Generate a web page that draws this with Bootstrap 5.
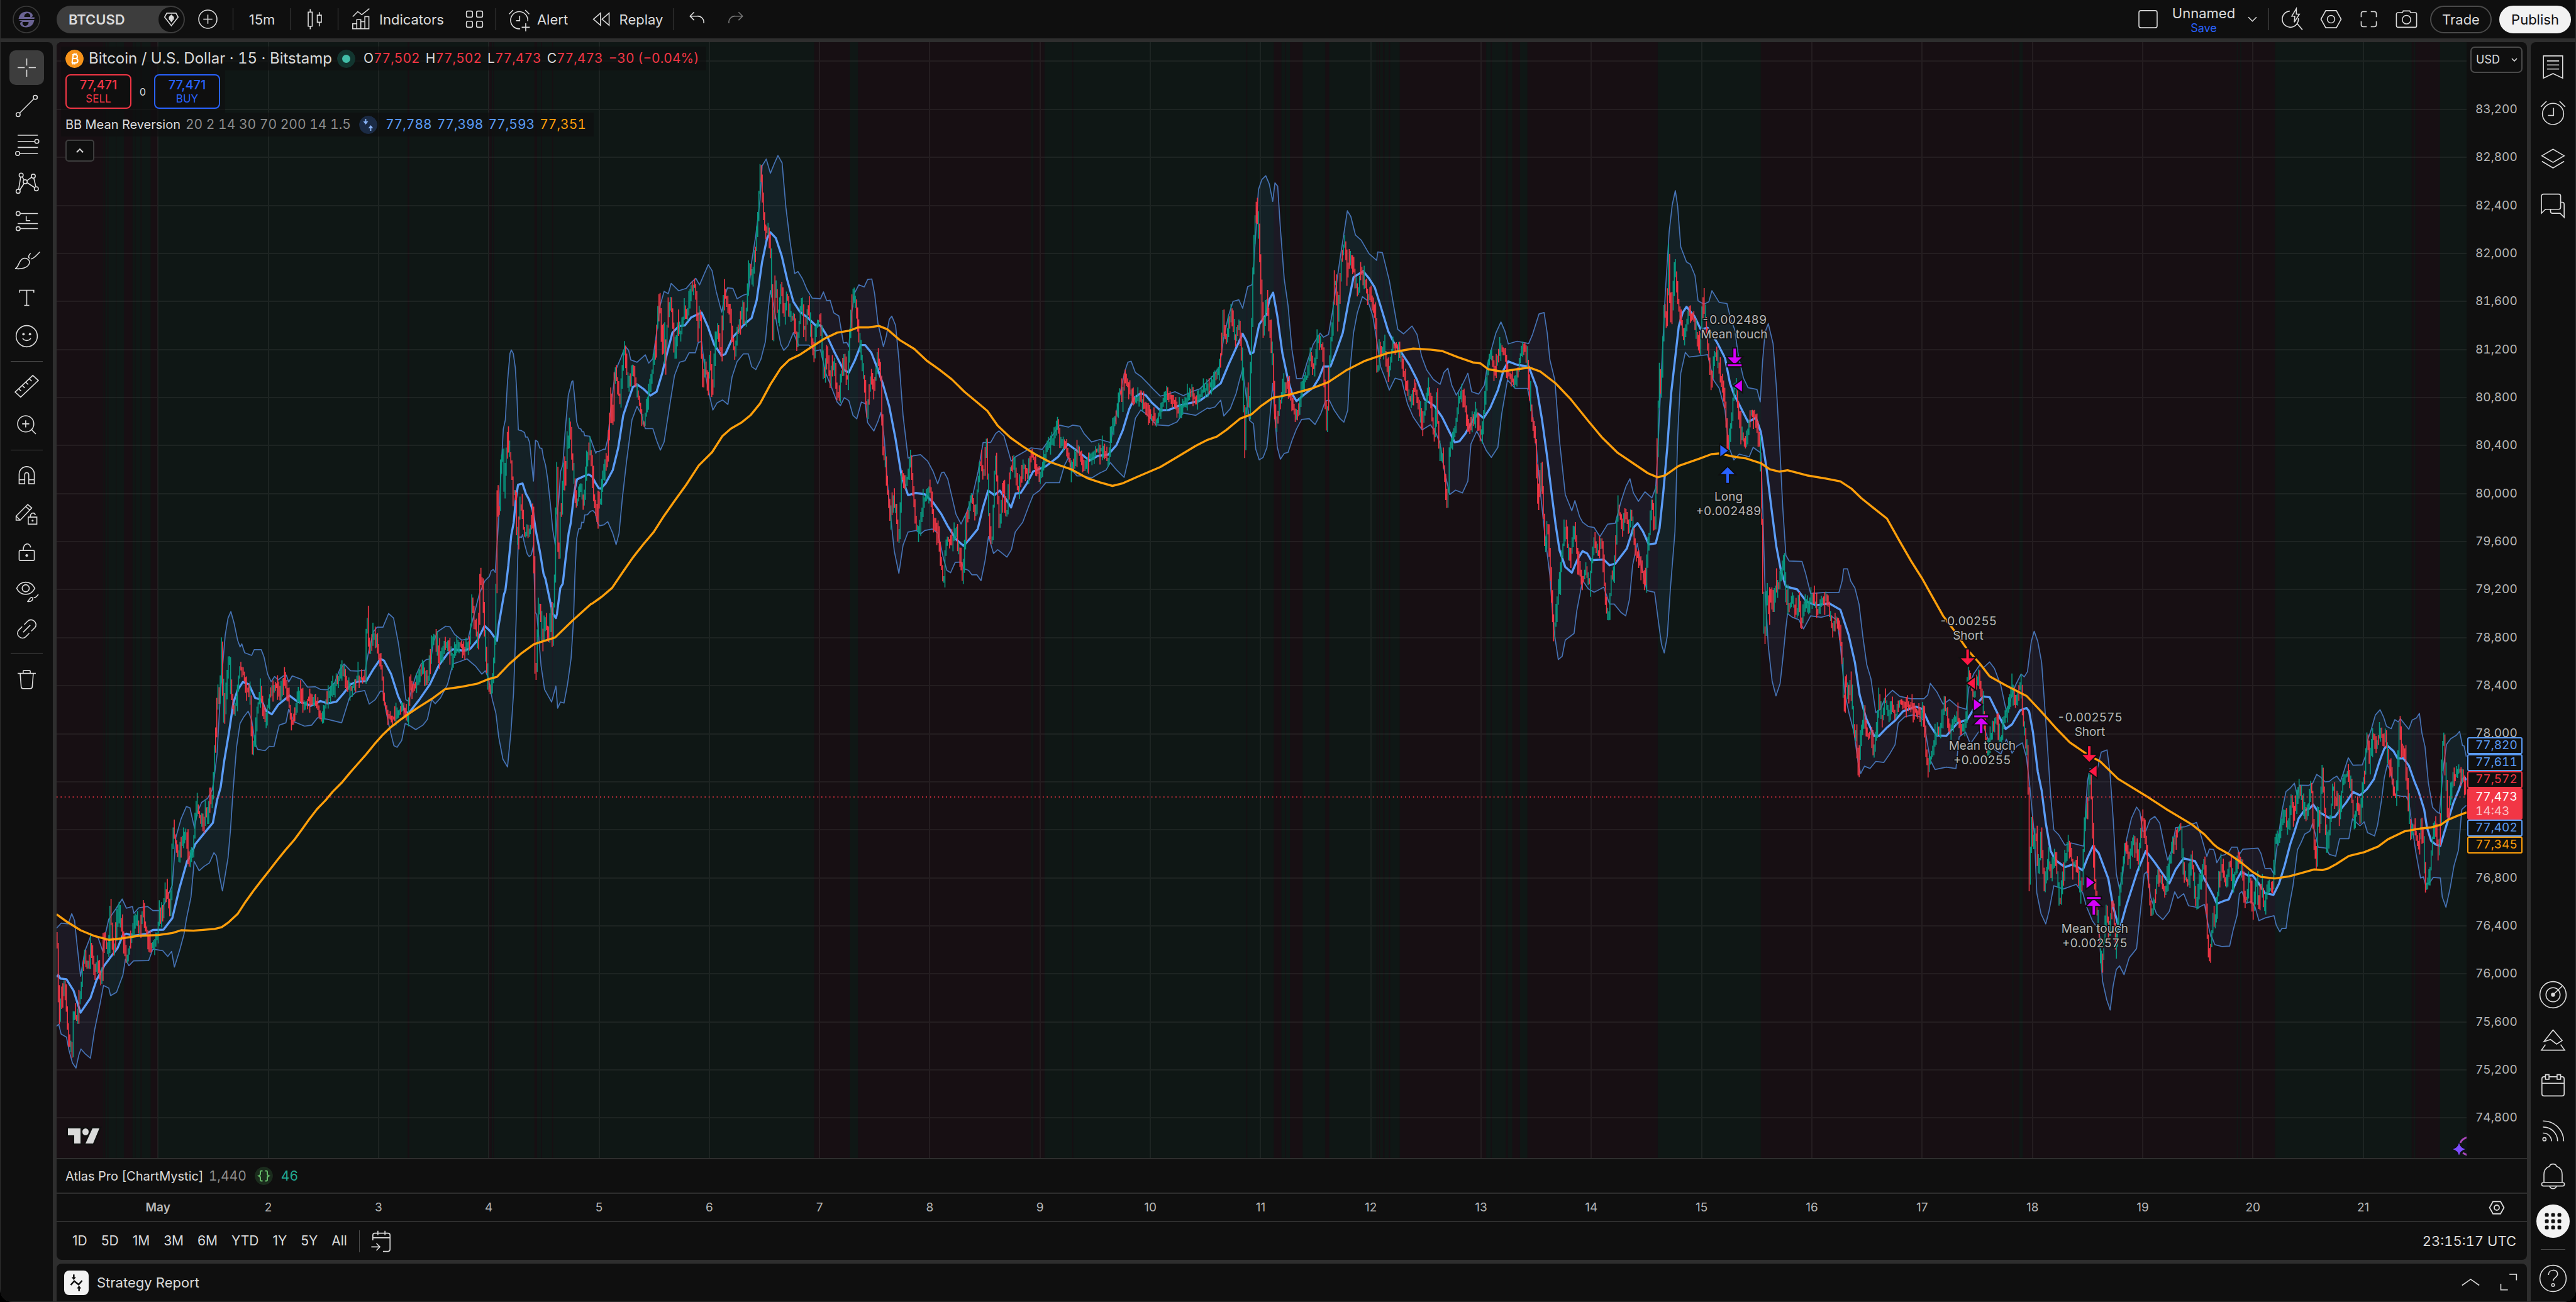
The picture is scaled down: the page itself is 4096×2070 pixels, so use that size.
<!DOCTYPE html>
<html lang="en" data-bs-theme="dark">
<head>
<meta charset="utf-8">
<meta name="viewport" content="width=device-width, initial-scale=1">
<title>BTCUSD 77,473</title>
<link rel="stylesheet" href="https://cdn.jsdelivr.net/npm/bootstrap@5.3.0/dist/css/bootstrap.min.css">
<style>
:root{--panel:#0f0f0f;--gutter:#2e2e2e;--ink:#dbdbdb;--dim:#b8b8b8;--faint:#8c8c8c;--bear:#f23645;--link:#2962ff;--band:#5b9cf6;--ema:#ff9f0a}
html{background:#000}
body{background:#000;color:var(--ink);font-family:Inter,"Liberation Sans",sans-serif;font-size:22px;line-height:28px;overflow:hidden}
button,select{font-family:inherit}
.shell{background:var(--gutter);border-radius:0 0 20px 20px;padding:0 1px 1px;overflow:hidden}
.pane{background:var(--panel)}
.topbar{height:61px;background:var(--panel)}
.work{gap:6px;padding-top:6px;min-height:0}
.rail-l{width:83px;padding-top:10px;border-radius:0 8px 0 0}
.rail-r{width:71px;padding-top:3px;border-radius:8px 0 0 0}
.tool{background:none;border:0;padding:0;color:var(--ink);display:flex;align-items:center;justify-content:center;flex:none}
.ico{width:45px;height:45px;fill:none;stroke:currentColor;stroke-width:1;flex:none}
.ico .solid{fill:currentColor;stroke:none}
.ico.lg{width:39px;height:39px}
.ico.sm{width:32px;height:32px}
.rail-l .tool{width:55px;height:55px;margin:3px 14px;border-radius:10px}
.rail-l .tool.on{background:#3d3d3d}
.rule-h{height:1px;margin:9px 16px;background:#4a4a4a;flex:none}
.rail-r .tool{width:71px;height:73px}
.rail-r .low .tool{height:72px}
.rail-r .low svg{overflow:visible}
.rule-v{width:1px;height:35px;background:#4a4a4a;flex:none}
.avatar{width:44px;height:44px;margin:0 26px 0 19px;flex:none}
.sym{width:204px;height:44px;border-radius:22px;background:#3d3d3d;font-weight:600;padding:0 2px 0 19px;justify-content:space-between}
.sym .gem{width:40px;height:40px;border-radius:50%;background:var(--panel)}
.w50{width:50px}.w60{width:60px}.w68{width:68px}.w72{width:72px}.w74{width:74px}.w91{width:91px}.w118{width:118px}.w128{width:128px}.w154{width:154px}.w182{width:182px}.w36{width:36px}
.gap6{gap:6px}
.sub{font-size:18px;line-height:20px;color:var(--link)}
.pill{height:44px;border-radius:22px;border:2px solid #4a4a4a}
.pill.trade{width:98px;margin-left:8px}
.pill.publish{width:114px;margin:0 7px 0 12px;background:#f2f2f2;border-color:#f2f2f2;color:#0f0f0f}
.chartbox{border-radius:8px;overflow:hidden;min-height:0}
.plot{min-width:0}
#chart{display:block;width:100%;height:100%;position:absolute;inset:0}
#chart text,.tnum,.prices{font-variant-numeric:tabular-nums}
.prices{width:96px;flex:none}
.prices .tick,.times .tick{position:absolute;font-size:19px;line-height:24px;color:var(--dim)}
.prices .tick{left:14px;transform:translateY(-50%)}
.times .tick{top:10px;transform:translateX(-50%)}
.tags{position:absolute;left:1px;width:88px}
.tag{height:27px;border:2px solid;border-radius:3px;padding-left:11px;font-size:19px;line-height:22px;background:var(--panel)}
.tag.last{height:50px;background:var(--bear);border-color:var(--bear);color:#fff;line-height:23px}
.tag.last span{color:#fbc3c7}
.usd{position:absolute;left:6px;top:7px;width:83px;height:42px;appearance:none;font-size:18px;line-height:24px;padding:0 0 0 7px;color:var(--ink);border:2px solid #4a4a4a;border-radius:7px;background:var(--panel) url("data:image/svg+xml,%3Csvg xmlns='http://www.w3.org/2000/svg' viewBox='0 0 10 6'%3E%3Cpath d='M1 1l4 4 4-4' fill='none' stroke='%23dbdbdb' stroke-width='1.6'/%3E%3C/svg%3E") no-repeat right 6px center/10px 6px}
.legend{position:absolute;left:7px;top:7px;z-index:2}
.lrow{background:rgba(15,15,15,.62);padding-left:7px;width:max-content}
.l1{height:38px;font-size:24px;padding-right:12px}
.l2{height:67px;padding-right:8px}
.l3{height:38px;font-size:20px;padding-right:12px}
.nums{font-size:21px}
.dot{width:29px;height:29px;border-radius:50%;flex:none}
.dot.mid{margin:0 13px}
.ohlc{font-size:21px;gap:9px;margin-left:13px}
.ohlc b{font-weight:400;color:var(--bear)}
.quote{width:105px;height:55px;border-radius:8px;border:2px solid;background:var(--panel);font-size:20px;line-height:23px;flex-direction:column;font-weight:500}
.quote small{font-size:17px;line-height:21px;font-weight:400}
.spread{width:36px;font-size:16px}
.fold{width:46px;height:35px;margin:5px 0 0 7px;border:2px solid #3d3d3d;border-radius:5px;background:var(--panel)}
.study{height:55px;border-top:2px solid var(--gutter);font-size:20px;padding-left:14px}
.timebar{height:45px;border-top:2px solid var(--gutter)}
.rangebar{height:62px;border-top:2px solid var(--gutter);padding:0 17px 0 14px;font-size:21px}
.rangebar .rng{padding:0 11px}
.clock{font-size:22px}
.report{height:60px;border-radius:8px 8px 0 0;padding-left:12px;font-size:22px}
.report .badge-ic{width:39px;height:39px;border-radius:8px;background:#f2f2f2;color:#0f0f0f;margin-right:13px}
.col-main{gap:6px;min-width:0}
.muted{color:var(--faint)}.blue{color:var(--band)}.orange{color:var(--ema)}.red{color:var(--bear)}.azure{color:var(--link)}.teal{color:#22ab94}
</style>
</head>
<body>
<div class="shell vh-100 d-flex flex-column">
  <header class="topbar d-flex align-items-center flex-shrink-0">
    <svg class="avatar" viewBox="0 0 44 44" aria-hidden="true"><circle cx="22" cy="22" r="21" fill="#0f0f0f" stroke="#3a3a3a" stroke-width="1.5"/><path d="M34.500 21H9.500C11 13 16 9.500 22.500 9.500c6 0 9.500 3.500 9.500 6 0 2-1.500 3-3.500 3H35zM28 18c1-4-2-6.500-5-6-3 .500-4.500 3-4.500 6z" fill="#6a6393" fill-rule="evenodd"/><path d="M9.500 23h25C33 31 28 34.500 21.500 34.500c-6 0-9.500-3.500-9.500-6 0-2 1.500-3 3.500-3zM16 26c-1 4 2 6.500 5 6 3-.500 4.500-3 4.500-6z" fill="#6a6393" fill-rule="evenodd"/></svg>
    <button class="tool sym">BTCUSD <span class="gem d-flex align-items-center justify-content-center"><svg class="ico" viewBox="0 0 28 28"><path d="M9.500 8h9l2.200 4-6.700 8.500L7.300 12zM14 10v7M12 12l2-2 2 2v2l-2 2-2-2z"/><path class="solid" d="M14 9.500l2 3-2 4-2-4z"/></svg></span></button>
    <button class="tool w72" aria-label="Compare"><svg class="ico" viewBox="0 0 28 28"><circle cx="14" cy="14" r="9"/><path d="M14 9.500v9M9.500 14h9"/></svg></button>
    <i class="rule-v ms-1"></i>
    <button class="tool w91">15m</button>
    <i class="rule-v"></i>
    <button class="tool w74" aria-label="Candles"><svg class="ico" viewBox="0 0 28 28"><path d="M7.500 7h4v14h-4zM9.500 7V4M9.500 21v3M16.500 10h4v7h-4zM18.500 10V7M18.500 17v4"/></svg></button>
    <i class="rule-v"></i>
    <button class="tool w182 gap6"><svg class="ico" viewBox="0 0 28 28"><path d="M5.500 11.500L10.500 6.500 14.500 9.500 22 3.500M5.500 18.500h4v5h-4zM9.500 14.500h4v9h-4zM13.500 16.500h4v7h-4zM17.500 11.500h4v12h-4z"/></svg>Indicators</button>
    <button class="tool w68" aria-label="Templates"><svg class="ico" viewBox="0 0 28 28"><rect x="6" y="6" width="6" height="6" rx="1.500"/><rect x="16" y="6" width="6" height="6" rx="1.500"/><rect x="6" y="16" width="6" height="6" rx="1.500"/><rect x="16" y="16" width="6" height="6" rx="1.500"/></svg></button>
    <i class="rule-v"></i>
    <button class="tool w128 gap6"><svg class="ico" viewBox="0 0 28 28"><path d="M15 23.500a8.500 8.500 0 1 1 7.500-7.500M4 9l4-4M20 5l4 4M14.500 10.500v5h-3.500M20.500 18v8M16.500 22h8"/></svg>Alert</button>
    <button class="tool w154 gap6"><svg class="ico" viewBox="0 0 28 28"><path d="M13 8v12l-7-6zM21.500 8v12l-7-6z"/></svg>Replay</button>
    <i class="rule-v"></i>
    <button class="tool w72" aria-label="Undo"><svg class="ico" viewBox="0 0 28 28"><path d="M11 7l-4 4 4 4M7 11h7a6 6 0 0 1 6.500 7"/></svg></button>
    <button class="tool w50" aria-label="Redo"><svg class="ico opacity-50" viewBox="0 0 28 28"><path d="M17 7l4 4-4 4M21 11h-7a6 6 0 0 0-6.500 7"/></svg></button>
    <div class="ms-auto d-flex align-items-center">
      <button class="tool w60" aria-label="Layout"><svg class="ico" viewBox="0 0 28 28"><rect x="5" y="5.500" width="18" height="17" rx="2"/></svg></button>
      <button class="tool w118 flex-column"><span>Unnamed</span><span class="sub">Save</span></button>
      <button class="tool w36" aria-label="Layouts"><svg class="ico" viewBox="0 0 28 28"><path d="M10 12l4 4 4-4"/></svg></button>
      <i class="rule-v mx-2"></i>
      <button class="tool w60" aria-label="Quick search"><svg class="ico" viewBox="0 0 28 28"><path d="M10.500 6a8 8 0 1 0 8.500 7M18 18.500l5 6M17 3.500l-4.500 7.500h3l-.500 6 5-8h-3z"/></svg></button>
      <button class="tool w60" aria-label="Settings"><svg class="ico" viewBox="0 0 28 28"><path d="M4 14l4.800-8.500h10.400L24 14l-4.800 8.500H8.800z"/><circle cx="14" cy="14" r="3.700"/></svg></button>
      <button class="tool w60" aria-label="Fullscreen"><svg class="ico" viewBox="0 0 28 28"><path d="M12 6.500H8.500a2 2 0 0 0-2 2V12M16 6.500h3.500a2 2 0 0 1 2 2V12M12 21.500H8.500a2 2 0 0 1-2-2V16M16 21.500h3.500a2 2 0 0 0 2-2V16"/></svg></button>
      <button class="tool w60" aria-label="Snapshot"><svg class="ico" viewBox="0 0 28 28"><path d="M5.500 7.500H10l.800-1.700h6.400l.800 1.700h4.500a1.500 1.500 0 0 1 1.500 1.500v11.500a1.500 1.500 0 0 1-1.500 1.500h-17A1.500 1.500 0 0 1 4 20.500V9a1.500 1.500 0 0 1 1.500-1.500z"/><circle cx="14" cy="14.500" r="4.200"/></svg></button>
      <button class="tool pill trade">Trade</button>
      <button class="tool pill publish">Publish</button>
    </div>
  </header>

  <div class="work d-flex flex-grow-1">
    <nav class="rail-l pane d-flex flex-column flex-shrink-0" id="draw"></nav>

    <main class="col-main d-flex flex-column flex-grow-1">
      <section class="chartbox pane d-flex flex-column flex-grow-1">
        <div class="d-flex flex-grow-1">
          <div class="plot position-relative flex-grow-1" id="plot">
            <svg id="chart" role="img" aria-label="BTCUSD chart"></svg>
            <div class="legend tnum">
              <div class="lrow l1 d-flex align-items-center">
                <svg class="dot" viewBox="0 0 29 29"><circle cx="14.500" cy="14.500" r="14.500" fill="#f7931a"/><path d="M11 8h5c4 0 4 6 0 6h-4 4c5 0 5 7 0 7h-6M12.500 8l-2 13M14 5.500l-.500 3M17 5.500l-.500 3M12 20.500l-.500 3M15 20.500l-.500 3" fill="none" stroke="#fff" stroke-width="2"/></svg>
                <span class="ms-2">Bitcoin / U.S. Dollar · 15 · Bitstamp</span>
                <svg class="dot ms-2" viewBox="0 0 29 29"><circle cx="14.500" cy="14.500" r="14.500" fill="#12352f"/><circle cx="14.500" cy="14.500" r="6.500" fill="#42bda8"/></svg>
                <span class="ohlc d-flex"><span>O<b>77,502</b></span><span>H<b>77,502</b></span><span>L<b>77,473</b></span><span>C<b>77,473</b></span><b>−30 (−0.04%)</b></span>
              </div>
              <div class="lrow l2 d-flex align-items-center">
                <button class="tool quote red">77,471<small>SELL</small></button>
                <span class="spread text-center">0</span>
                <button class="tool quote azure">77,471<small>BUY</small></button>
              </div>
              <div class="lrow l3 d-flex align-items-center">
                <span>BB Mean Reversion</span><span class="muted nums ms-2">20 2 14 30 70 200 14 1.5</span>
                <svg class="dot mid" viewBox="0 0 29 29"><circle cx="14.500" cy="14.500" r="14.500" fill="#1b2b45"/><path d="M10.500 5v5M18.500 24v-5" stroke="#8ab4f8" stroke-width="1.800"/><path d="M6.500 9h8l-4 5zM14.500 20h8l-4-5z" fill="#8ab4f8"/></svg>
                <span class="d-flex blue nums gap-2"><span>77,788</span><span>77,398</span><span>77,593</span><span class="orange">77,351</span></span>
              </div>
              <button class="tool fold" aria-label="Collapse"><svg class="ico sm" viewBox="0 0 28 28"><path d="M9.500 16l4.500-4.500 4.500 4.500" stroke-width="1.800"/></svg></button>
            </div>
          </div>
          <div class="prices position-relative" id="prices">
            <select class="usd" aria-label="Currency"><option>USD</option></select>
          </div>
        </div>
        <div class="study tnum d-flex align-items-center flex-shrink-0">
          <span>Atlas Pro [ChartMystic]</span><span class="muted nums ms-2">1,440</span>
          <svg class="dot mid" viewBox="0 0 29 29"><circle cx="14.500" cy="14.500" r="14.500" fill="#1b2c1d"/><path d="M12.500 6.500h-2q-1.500 0-1.500 2v3q0 2-2.500 3 2.500 1 2.500 3v3q0 2 1.500 2h2M16.500 6.500h2q1.500 0 1.500 2v3q0 2 2.500 3-2.500 1-2.500 3v3q0 2-1.500 2h-2" fill="none" stroke="#66bb6a" stroke-width="2"/></svg>
          <span class="teal nums">46</span>
        </div>
        <div class="timebar d-flex flex-shrink-0">
          <div class="times position-relative flex-grow-1" id="times"></div>
          <button class="tool prices" aria-label="Axis settings"><svg class="ico sm" viewBox="0 0 28 28"><path d="M4 14l4.800-8.500h10.400L24 14l-4.800 8.500H8.800z" stroke-width="1.600"/><circle cx="14" cy="14" r="3.500" stroke-width="1.600"/></svg></button>
        </div>
        <div class="rangebar d-flex align-items-center flex-shrink-0">
          <div class="d-flex" id="ranges"></div>
          <i class="rule-v mx-2"></i>
          <button class="tool ms-1" aria-label="Go to date"><svg class="ico" viewBox="0 0 28 28"><path d="M5.500 13V8a2 2 0 0 1 2-2h13a2 2 0 0 1 2 2v14a2 2 0 0 1-2 2h-5M5.500 10.500h17M10.500 3.500v4.500M17.500 3.500v4.500M4 19.500h8M9 16l3.500 3.500L9 23"/></svg></button>
          <button class="tool clock tnum ms-auto">23:15:17 UTC</button>
        </div>
      </section>
      <section class="report pane d-flex align-items-center flex-shrink-0">
        <span class="badge-ic d-flex align-items-center justify-content-center"><svg class="ico lg" viewBox="0 0 28 28"><path d="M7.500 16.500l4-4.500 5 4 4-4.500M11 4.500v4M17 23.500v-4" stroke-width="1.800"/><path class="solid" d="M8.500 7.500h5L11 11zM14.500 20.500h5L17 17z"/></svg></span>
        <span>Strategy Report</span>
        <button class="tool ms-auto w60" aria-label="Open"><svg class="ico" viewBox="0 0 28 28"><path d="M5.500 16.500l8.500-6 8.500 6"/></svg></button>
        <button class="tool w60" aria-label="Maximize"><svg class="ico" viewBox="0 0 28 28"><path d="M15 5.500h7v6M6.500 15v6h7"/></svg></button>
      </section>
    </main>

    <aside class="rail-r pane d-flex flex-column flex-shrink-0">
      <div id="side"></div>
      <div class="low mt-auto" id="sidelow"></div>
      <div class="rule-h"></div>
      <button class="tool" aria-label="Help"><svg class="ico" viewBox="0 0 28 28"><circle cx="14" cy="14" r="13"/><path d="M9.500 10.500c0-6 9-6 9-1 0 4-4.500 3.500-4.500 7"/><circle cx="14" cy="20.500" r="1.400"/></svg></button>
    </aside>
  </div>
</div>
<script src="https://cdn.jsdelivr.net/npm/bootstrap@5.3.0/dist/js/bootstrap.bundle.min.js"></script>
<script>
// ---------- toolbars ----------
const C=(x,y,r=1.6)=>`<circle cx="${x}" cy="${y}" r="${r}"/>`;
const P=(d,a='')=>`<path d="${d}" ${a}/>`;
const drawTools=[
 ['Cross',P('M14 5v7M14 16v7M5 14h7M16 14h7'),1],
 ['Trend line',C(5.5,22.5,2)+C(22.5,5.500,2)+P('M7 21L21 7')],
 ['Fib',P('M5 5h20M5 11h17M5 17h20M7 23h18')+C(24,11,2)+C(5,23,2)],
 ['Pattern',C(5.5,22.5,2)+C(8.5,6.5,2)+C(12.5,13,2)+C(20.5,7.5,2)+C(23.5,20,2)+P('M6 20.500L8 8.500M9.500 8.200l2 3.200M14 12l5-3.500M21 9.500l2 8.500M7 21.500l4.500-7M14.500 14l7.500 5')],
 ['Forecast',C(5.5,6.5,2)+C(5.5,21.5,2)+P('M7.500 6.500H25M5 16.500h20M7.500 21.500H25M13.500 9v4.500h4')],
 ['Brush',P('M2.500 23c4-1 3-8 8-10 4-1 7 2 6 5-1 4-8 6-14 5zM17 13c-2-1-1-4 1-5M18 13.500c3 0 6-4 9-7')],
 ['Text',P('M7 9V6.500h14V9M14 6.500v15M11.500 21.500h5')],
 ['Emoji',C(14,14,10.500)+P('M10 16c1.500 3 6.500 3 8 0')+'<circle class="solid" cx="10.800" cy="12" r="1.200"/><circle class="solid" cx="17.200" cy="12" r="1.200"/>'],
 null,
 ['Measure',P('M2.500 19.500L20 3l5.500 5L8 24.500zM6 16.200l2.500 2.300M9.500 13l2.500 2.300M13 9.700l2.500 2.300M16.500 6.400L19 8.700')],
 ['Zoom',C(13,13,8)+P('M13 9.500v7M9.500 13h7M18.500 18.500L23 23')],
 null,
 ['Magnet',P('M6.500 22.500V13a7.500 7.500 0 0 1 15 0v9.500H16V13.500a2 2 0 0 0-4 0v9zM6.500 18.500H12M16 18.500h5.500')],
 ['Keep drawing',P('M3.500 20.500v-4L15 5l4 3.500-11.500 12zM13 7l4 3.500M3.500 16.500l4 4M15.500 17.500h8.500v7h-8.500zM17.500 17.500c0-5 4.500-5 5-2')+'<circle class="solid" cx="19.800" cy="21" r="1"/>'],
 ['Lock',P('M7.500 12.500h13a1 1 0 0 1 1 1v8a1 1 0 0 1-1 1h-13a1 1 0 0 1-1-1v-8a1 1 0 0 1 1-1zM10.500 12.500c0-8 6.500-8 7.500-3')+'<circle class="solid" cx="14" cy="17.500" r="1.300"/>'],
 ['Hide',P('M4 12c4-8 14-8 18 0-4 8-14 8-18 0z')+C(13,12,3.500)+P('M14.500 25c2 0 2-4 4.500-4 2.500 1 0 5-4.500 4zM21 21c1 1 3-1 4.500-3')],
 ['Link',P('M11.500 10l3.500-3.500c4-4 11 2 7 6.500L18.500 16.500M16.500 18.500L13 22c-4 4-11-2-7-6.500L9.500 12M10.500 17.500l7-7')],
 null,
 ['Remove',P('M5 8.500h18M10.500 8.500V6.500a1 1 0 0 1 1-1h5a1 1 0 0 1 1 1v2M7.500 8.500l1 13a2 2 0 0 0 2 2h7a2 2 0 0 0 2-2l1-13')]
];
const btn=([n,i,on])=>`<button class="tool${on?' on':''}" aria-label="${n}"><svg class="ico" viewBox="0 0 28 28">${i}</svg></button>`;
draw.innerHTML=drawTools.map(t=>t?btn(t):'<div class="rule-h"></div>').join('');
side.innerHTML=[
 ['Watchlist',P('M4.500 3h19v22L14 20.500 4.500 25zM8 8h12M8 12h12M8 16h12')],
 ['Alerts',C(14,15,10.500)+P('M14.500 9v7.500H9M2 8l5.500-5.500M20.500 2.500L26 8')],
 ['Object tree',P('M14 4.500L25 11 14 17.500 3 11zM3 16.500L14 23l11-6.500')],
 ['Chats',P('M2.500 22.500V5.500a2 2 0 0 1 2-2h15a2 2 0 0 1 2 2v11a2 2 0 0 1-2 2H6.500zM21.500 11.500h1.500a2 2 0 0 1 2 2v13l-4-4h-7.500a2 2 0 0 1-2-2v-2')]
].map(btn).join('');
sidelow.innerHTML=[
 ['Screener',C(14,14,13)+C(14,14,7)+'<circle class="solid" cx="14" cy="14" r="2"/>'+P('M14 14l9-8.500')],
 ['Pine',P('M14 4L23 14.500 17.500 18 11.500 13.500 5 15.500zM6.500 18.500L2.500 24h23l-4-5.500')],
 ['Calendar',P('M6.500 5.500H5a2 2 0 0 0-2 2v15a2 2 0 0 0 2 2h18a2 2 0 0 0 2-2v-15a2 2 0 0 0-2-2h-1.500M10 5.500h8M3 12h22M6.500 3.500H10v4.500H6.500zM18 3.500h3.500v4.500H18z')],
 ['Stream',C(5.5,22.5,1.600)+P('M4 16.500a8 8 0 0 1 8.500 8M4 10.500a14 14 0 0 1 14.500 14M4 4.500a20 20 0 0 1 20.500 20')],
 ['Notifications',P('M5 20.500v-8c0-5 3-7 5.500-8 1-3 6-3 7 0 2.500 1 5.500 3 5.500 8v8M4.500 20.500h19a1.700 1.700 0 0 1 0 3.500h-19a1.700 1.700 0 0 1 0-3.500zM10.500 24c1 3.500 6 3.500 7 0')],
 ['Apps','<circle cx="14" cy="14" r="16.500" fill="#f2f2f2" stroke="none"/>'+[6,12.2,18.400].map(y=>[6,12.2,18.400].map(x=>`<rect x="${x}" y="${y}" width="3.700" height="3.700" rx="1" fill="#0f0f0f" stroke="none"/>`).join('')).join('')]
].map(btn).join('');
ranges.innerHTML=['1D','5D','1M','3M','6M','YTD','1Y','5Y','All'].map(r=>`<button class="tool rng">${r}</button>`).join('');

// ---------- series ----------
// Each part: origin x, origin y, units per step x, units per step y, then x,y pairs.
const A=[100,1100,1.4255,1.4792],B=[1100,280,1.2062,1.7043],D=[2300,300,1.3067,1.4933],E=[3400,600,1.568,1.0814],F=[4250,1350,1.8023,2.24],G=[940,660,3,2.8];
const join=parts=>{const o=[];for(const [f,s] of parts)s.trim().split(/[\s;]+/).forEach(p=>{const [x,y]=p.split(',').map(Number);o.push([f[0]+x/f[2],f[1]+y/f[3]])});return o};
const ema=join([
[A,'17,1061 45,1082 85,1108 125,1125 165,1136 200,1132 250,1124 305,1122 345,1116 370,1108 405,1109 465,1104 485,1099 505,1084 530,1060 550,1028 575,992 597,962 617,936 640,905 665,873 690,843 712,812 732,783 755,752 780,725 800,700 827,672 850,643 872,617 895,590 917,562 940,535 962,513 990,490 1017,470 1045,451 1080,428 1118,399 1160,393 1210,383 1240,370 1265,363 1300,325 1335,293 1370,267 1430,247 1480,197 1530,150'],
[B,'92,1568 115,1545 140,1515 165,1463 190,1412 215,1367 240,1325 265,1270 290,1220 318,1165 348,1100 380,1055 405,1000 425,975 450,955 472,930 495,890 520,825 545,770 565,742 590,725 620,697 650,670 680,650 710,643 730,632 755,632 780,627 800,638 830,675 865,705 895,745 925,775 955,808 985,850 1015,885 1040,915 1065,965 1095,1005 1125,1035 1155,1062 1190,1088 1240,1112 1280,1143 1310,1157 1340,1169 1365,1160 1400,1138 1455,1105 1500,1067 1540,1033 1568,1013'],
[D,'155,848 180,828 215,795 245,782 270,757 300,733 345,723 400,706 445,686 490,652 540,623 600,600 665,587 710,590 740,594 780,612 820,628 840,631 860,648 895,655 935,648 967,643 995,655 1035,690 1075,738 1120,802 1155,850 1195,895 1240,930 1275,957 1300,969 1320,963 1355,935 1410,913 1440,900 1460,898 1490,906 1530,913'],
[E,'157,347 185,360 215,365 240,362 300,373 360,380 405,386 440,402 470,422 510,444 550,466 590,515 625,557 660,595 690,632 725,675 760,707 800,747 840,778 870,805 920,824 985,847 1030,880 1075,915 1120,947 1175,973 1215,988 1270,1025 1360,1063 1420,1090 1500,1123 1540,1145 1568,1166'],
[F,'285,750 325,778 365,812 410,858 440,880 490,887 540,878 580,865 630,847 660,850 680,843 710,823 755,787 810,770 860,745 895,713 955,677 1010,665 1050,660 1085,648 1110,626 1145,608 1177,593']]);
const mid=join([
[A,'17,1245 22,1240 28,1250 45,1252 65,1285 85,1350 113,1307 130,1255 152,1212 175,1180 190,1160 205,1122 215,1118 235,1124 270,1119 290,1107 320,1106 345,1072 365,985 387,905 397,890 410,855 435,823 460,792 472,725 482,688 492,610 505,530 518,440 530,402 545,378 562,385 580,425 597,430 610,462 627,473 645,445 677,418 700,436 720,440 737,448 765,434 785,441 810,436 830,412 850,385 870,377 895,375 915,340 935,310 945,315 965,355 985,420 1005,465 1015,470 1045,430 1075,385 1100,330 1125,295 1140,282 1170,286 1190,280 1210,255 1230,213 1245,228 1265,257 1270,210 1285,120'],
[G,'192,1440 210,1300 228,1130 242,1060 255,930 268,850 295,843 315,900 335,935 355,990 375,1110 400,1230 420,1345 432,1375 455,1480 475,1568'],
[A,'1432,190'],
[G,'500,1568 520,1425 535,1400 552,1260 570,1120 582,1065 600,920 612,850 620,820 660,803 690,793 710,805 730,840 750,870'],
[B,'113,1178 125,1160 142,1115 155,1040 167,930 180,875 190,835 200,825 215,840 232,863 247,850 260,790 272,720 285,650 300,628 315,625 330,598 355,582 370,630 385,690 403,728 412,722 430,665 455,625 475,600 487,540 500,410 512,330 520,310 533,330 547,390 560,470 575,545 590,578 610,600 628,625 640,625 655,660 675,720 695,775 708,785 722,745 737,692 747,692 762,718 775,765 790,825 805,900 820,1010 835,1140 850,1200 868,1193 890,1197 910,1225 930,1265 945,1305 965,1350 983,1372 1000,1345 1017,1315 1030,1240 1042,1185 1057,1200 1070,1185 1085,1215 1097,1242 1108,1195 1120,1193 1135,1160 1150,1120 1180,1103 1210,1070 1233,1027 1260,1055 1285,1083 1305,1067 1330,1063 1350,1030 1365,980 1380,910 1393,870 1408,855 1420,862 1435,888 1455,913 1475,912 1500,897 1530,887 1550,880 1568,862'],
[D,'140,712 165,690 185,635 205,585 222,543 232,565 242,603 250,598 265,515 282,488 292,440 301,421 312,490 325,600 340,680 350,720 362,743 380,725 405,703 420,675 432,640 450,640 465,595 482,540 495,460 510,375 535,357 550,378 565,405 580,460 600,535 615,570 635,600 655,635 675,680 695,738 720,757 740,790 755,825 773,865 785,862 800,840 825,790 833,780 848,793 865,763 885,710 900,650 912,625 935,635 965,640 985,700 1000,800 1012,900 1025,1020 1035,1110 1045,1185 1060,1235 1077,1252 1092,1212 1105,1188 1117,1195 1127,1215 1160,1213 1175,1230 1190,1225 1220,1180 1237,1118 1248,1105 1262,1130 1277,1168 1295,1165 1305,1120 1315,1010 1325,880 1335,720 1345,620 1355,520 1365,480 1375,463 1395,490 1412,530 1430,525 1455,570 1475,615 1488,690 1498,722 1515,760 1535,805 1555,792'],
[E,'157,280 175,360 190,445 205,525 220,580 235,612 270,618 300,645 330,652 370,648 405,662 430,715 450,775 465,845 485,895 510,933 525,933 550,915 575,900 600,880 640,870 660,875 680,905 705,932 735,933 770,905 800,898 825,870 850,848 870,850 895,885 920,918 940,908 965,878 985,873 993,880 1005,925 1020,1010 1032,1050 1045,1120 1060,1180 1075,1200 1105,1215 1130,1209 1160,1222 1175,1195 1192,1170 1210,1185 1240,1240 1255,1300 1275,1350 1295,1300 1330,1225 1357,1180 1385,1205 1410,1230 1430,1250 1450,1220 1475,1196 1510,1202 1535,1235'],
[F,'270,965 282,1000 305,988 325,980 340,935 355,890 370,857 395,875 410,873 430,905 455,953 485,960 505,910 525,830 545,735 560,680 575,620 595,585 615,575 627,558 645,590 665,603 685,618 705,613 720,588 745,550 770,502 795,517 820,490 845,445 865,365 882,310 893,296 915,320 930,353 950,352 970,385 990,455 1005,500 1025,580 1035,660 1050,720 1065,735 1083,742 1095,690 1110,630 1130,550 1150,490 1163,445 1170,437 1176,450']]);
const upper=join([
[A,'17,1102 30,1087 50,1089 60,1059 68,1080 75,1150 85,1243 97,1170 115,1122 135,1130 148,1170 155,1120 165,1075 185,1045 203,1016 215,1043 232,1038 236,1058 250,1042 275,1038 290,1050 310,1050 325,1025 345,975 355,835 370,780 385,744 395,748 408,808 415,765 428,732 445,720 458,695 463,665 472,590 482,400 495,240 503,190 511,171 520,205 530,255 537,275 542,266 550,292 570,300 577,283 597,283 605,305 615,355 625,377 635,362 645,372 660,360 668,358 675,378 685,360 712,371 728,393 750,392 765,400 785,401 805,380 820,340 832,325 850,345 870,346 892,343 900,295 915,230 925,217 942,217 958,177 972,190 985,260 998,350 1007,430 1015,435 1022,405 1035,360 1050,325 1065,312 1078,310 1085,260 1097,230 1120,214 1132,216 1145,238 1165,255 1183,252 1195,200 1215,120'],
[G,'70,1385 97,1360 107,1330 120,1322 132,1338 138,1250 150,1080 165,800 180,540 192,490 205,280 220,120 228,100 240,120 252,200 260,330 270,545 290,550 307,560 313,585 325,585 337,615 350,740 360,830 372,603 385,610 397,645 410,648 420,700 432,740 445,820 460,950 475,1100 490,1185 500,1030 512,920 522,775 535,740 550,540 568,350 580,310 588,277 595,272 603,340 610,410 618,500 630,535 643,540 650,555 660,555 665,577 695,580 710,620 732,675 737,665 750,665 780,652'],
[B,'124,1045 130,1010 137,910 148,780 160,740 172,696 180,710 185,742 200,750 220,725 228,753 238,738 248,640 255,560 265,510 275,518 282,483 300,508 318,500 330,480 341,466 350,488 360,455 371,420 380,440 390,510 403,580 410,530 417,498 430,500 440,535 455,523 467,518 475,410 485,320 495,200 500,85 510,62 520,110 530,75 538,50 548,75 557,225 567,340 578,450 586,443 597,468 608,505 620,533 640,535 647,512 655,542 663,540 672,583 684,593 695,685 703,683 708,698 715,580 722,515 732,488 745,495 753,470 763,468 770,520 778,620 791,697 798,660 805,605 811,594 820,625 828,740 838,930 850,1075 862,1067 880,1063 897,1085 910,1120 921,1162 930,1125 936,1122 945,1145 955,1205 965,1265 977,1298 990,1260 1005,1200 1018,1120 1030,1022 1048,1022 1060,992 1068,983 1080,1000 1097,1085 1108,1070 1120,1060 1145,1040 1172,1045 1187,1015 1200,990 1213,963 1235,970 1245,963 1262,967 1272,992 1290,1020 1310,1012 1335,1022 1345,960 1360,845 1370,780 1377,750 1385,747 1395,785 1410,800 1425,822 1437,840 1455,865 1475,857 1490,850 1510,863 1530,850 1550,840 1568,815'],
[D,'145,668 162,640 172,560 185,490 197,447 212,442 222,467 235,403 247,397 257,230 263,115 272,85 282,74 291,98 300,150 306,95 313,105 320,230 330,380 340,460 350,590 362,676 377,675 390,625 405,575 423,541 432,553 445,545 455,480 465,400 475,320 483,260 494,178 503,195 515,250 530,265 550,305 570,325 573,300 585,302 603,385 615,465 625,530 640,543 662,520 675,545 687,610 700,650 717,678 735,693 745,657 755,645 765,695 777,725 790,700 807,660 817,715 835,722 850,695 858,635 868,590 880,540 893,508 903,535 912,573 935,565 965,572 975,545 992,484 1005,480 1013,540 1020,620 1033,680 1045,860 1060,1020 1077,1068 1085,1038 1097,1085 1105,1102 1120,1115 1135,1118 1150,1145 1170,1108 1190,1105 1205,1040 1218,995 1228,973 1237,1015 1250,1040 1267,1012 1285,1030 1295,1000 1302,850 1310,650 1320,420 1330,240 1338,160 1346,118 1352,165 1360,285 1375,330 1385,337 1397,370 1405,445 1420,455 1433,448 1441,415 1460,450 1480,453 1490,500 1500,530 1510,610 1523,675 1535,703 1558,708'],
[E,'155,215 162,130 170,65 180,47 195,90 205,180 215,300 225,440 235,545 245,557 285,558 297,585 312,627 350,625 400,625 410,600 415,574 427,574 437,600 450,615 463,650 475,720 487,780 500,810 515,883 530,875 545,850 567,835 590,848 625,853 665,853 677,845 685,820 705,838 725,865 745,855 770,870 797,876 805,830 820,800 840,780 850,787 870,774 885,788 905,825 922,880 935,855 950,825 968,800 978,806 988,795 1000,730 1009,708 1020,730 1032,775 1045,900 1060,1060 1070,1135 1085,1145 1105,1168 1125,1163 1163,1170 1168,1110 1175,1030 1183,1003 1205,1006 1218,968 1236,963 1245,1010 1255,1110 1265,1230 1275,1262 1285,1230 1297,1155 1312,1110 1328,1086 1338,1095 1347,1138 1357,1137 1370,1113 1385,1106 1400,1120 1415,1170 1425,1200 1437,1180 1450,1130 1480,1128 1515,1119 1530,1150 1547,1192 1555,1176 1568,1177'],
[F,'275,775 282,817 297,785 310,782 325,770 335,748 355,748 363,780 375,757 400,755 430,752 440,775 455,843 475,842 487,868 495,770 505,680 515,590 530,500 545,485 560,463 570,515 578,472 610,473 625,465 640,424 655,437 670,457 685,455 700,440 712,432 725,455 737,412 753,350 770,383 803,382 815,340 823,270 835,225 850,160 867,136 880,170 890,210 907,220 920,180 932,190 940,176 955,200 970,223 982,182 997,173 1008,152 1017,240 1028,300 1040,460 1055,570 1070,590 1080,598 1087,490 1095,380 1105,290 1120,265 1140,250 1152,232 1162,295 1168,297 1176,345']]);
const lower=join([
[A,'17,1390 23,1384 30,1413 45,1422 52,1460 62,1498 72,1513 80,1475 86,1457 97,1470 113,1484 125,1400 140,1325 150,1270 165,1278 170,1300 187,1290 205,1240 212,1193 222,1212 235,1198 278,1197 290,1163 318,1168 332,1185 343,1170 351,1216 365,1170 378,1120 385,1075 398,1010 407,905 421,933 435,920 450,910 463,880 470,890 478,945 487,992 495,945 503,895 510,810 517,700 527,570 537,500 548,480 560,464 570,490 580,560 587,576 608,580 620,567 633,568 648,505 667,498 675,458 690,495 720,508 740,505 757,483 785,488 825,498 847,425 865,408 890,403 903,443 920,430 935,405 942,405 950,460 960,510 973,565 982,570 995,550 1005,500 1020,508 1035,518 1055,505 1068,488 1080,430 1090,442 1105,425 1125,385 1140,325 1160,318 1180,310 1205,332 1222,355 1232,345 1240,365 1252,430 1262,470 1270,540 1282,605 1295,628 1305,520 1312,410 1318,240'],
[G,'258,1568 265,1300 270,1150 280,1140 288,1145 295,1127 307,1180 323,1235 335,1250 347,1240 360,1188 370,1560'],
[A,'1378,180 1390,330 1400,400 1420,437 1432,390 1437,455 1445,437 1455,440 1465,385 1475,310 1483,180'],
[G,'600,1568 607,1360 618,1150 630,1095 642,1095 648,1058 660,1062 666,1018 682,1017 700,998 715,994 730,1010 742,1065 755,1078 780,1073'],
[B,'130,1290 142,1330 150,1368 157,1330 165,1210 175,1085 188,945 200,900 210,925 220,975 238,975 247,1015 256,1048 265,1020 278,900 290,795 302,750 315,745 325,718 340,718 347,683 355,680 365,800 375,870 382,912 392,888 405,878 418,893 428,800 440,748 455,722 467,722 475,765 485,775 497,740 508,680 515,570 520,507 527,550 535,620 545,690 552,710 562,695 575,650 587,692 612,692 628,712 640,708 652,785 665,830 680,885 688,897 697,870 708,880 718,930 727,942 738,885 747,890 753,955 768,983 778,950 785,920 793,1010 800,1150 808,1270 817,1390 828,1465 838,1370 850,1325 870,1320 880,1332 890,1320 908,1315 922,1330 935,1415 943,1455 952,1463 963,1428 977,1427 985,1450 995,1455 1003,1470 1015,1470 1025,1490 1035,1420 1043,1340 1055,1398 1065,1385 1087,1410 1098,1385 1107,1325 1125,1292 1140,1235 1150,1200 1165,1185 1180,1158 1213,1158 1225,1100 1235,1072 1243,1115 1255,1135 1270,1135 1290,1142 1310,1125 1325,1115 1335,1090 1350,1115 1368,1140 1378,1080 1385,1020 1395,940 1408,912 1425,930 1445,962 1475,965 1495,952 1510,922 1540,930 1568,905'],
[D,'135,765 150,760 165,740 173,787 190,765 205,720 215,675 222,648 230,720 240,800 250,810 256,885 265,917 275,910 285,880 292,800 300,690 305,780 312,880 320,915 330,898 340,895 350,860 362,825 375,797 395,795 410,812 425,780 437,742 447,740 460,770 475,795 485,805 495,770 500,660 510,540 520,480 533,433 547,445 560,490 570,560 580,640 592,675 603,710 618,675 635,680 650,750 665,790 688,828 710,813 725,840 735,870 745,945 760,1020 775,1007 793,1015 807,980 815,870 830,832 845,865 855,890 868,910 885,880 895,780 910,680 930,705 962,705 972,760 985,880 995,1010 1007,1140 1020,1260 1030,1420 1042,1510 1052,1500 1060,1452 1083,1432 1090,1365 1105,1275 1120,1300 1135,1310 1160,1295 1175,1345 1187,1345 1205,1370 1217,1380 1227,1330 1235,1230 1247,1165 1257,1225 1272,1305 1292,1310 1300,1380 1310,1465 1317,1490 1325,1440 1333,1300 1345,1130 1352,850 1360,660 1372,598 1382,612 1410,608 1430,605 1445,680 1460,705 1475,770 1485,880 1498,917 1512,900 1538,908 1548,880'],
[E,'157,325 163,450 170,620 180,740 192,815 204,847 217,820 225,770 235,700 240,670 255,678 275,683 290,703 312,675 345,678 372,673 395,685 405,740 418,840 432,885 447,925 460,990 468,1014 480,998 497,1003 515,988 540,990 560,970 575,952 585,905 605,892 630,888 652,892 665,900 675,945 685,985 700,1005 735,1000 765,1003 775,935 795,925 810,950 825,935 850,910 865,940 885,962 905,972 922,940 940,970 955,955 972,948 985,980 995,1040 1010,1150 1017,1270 1030,1315 1045,1337 1055,1310 1070,1255 1100,1262 1140,1252 1160,1270 1172,1300 1190,1330 1210,1350 1222,1460 1235,1500 1246,1522 1255,1470 1265,1435 1275,1427 1289,1446 1305,1410 1328,1390 1340,1310 1352,1230 1360,1225 1372,1280 1390,1315 1410,1328 1430,1310 1447,1268 1457,1282 1475,1272 1490,1298 1505,1300 1520,1302 1540,1295 1550,1335 1560,1365'],
[F,'262,1140 275,1182 300,1190 328,1188 340,1120 355,1050 363,955 372,945 388,997 405,990 418,1010 433,1075 455,1063 487,1053 495,1095 508,1125 515,1110 530,1110 540,1020 555,920 563,840 571,760 585,725 597,690 615,677 625,643 635,690 645,748 673,752 685,780 708,788 722,710 755,710 768,622 795,653 810,635 822,683 847,698 858,650 872,540 882,440 893,380 905,410 920,515 945,522 960,522 970,545 980,640 995,770 1012,885 1022,880 1030,915 1045,905 1058,882 1083,885 1090,970 1103,1015 1118,930 1132,830 1148,760 1155,650 1160,580 1176,562']]);
const price=join([
[A,'17,1115 21,1170 25,1390 30,1330 40,1260 50,1400 55,1440 62,1470 66,1350 75,1370 85,1300 92,1220 97,1190 107,1225 115,1150 125,1230 135,1200 145,1270 152,1110 165,1180 170,1030 178,1190 185,1130 193,1040 203,1100 217,1200 230,1130 245,1070 253,1110 262,1055 275,1130 288,1160 303,1120 310,1050 316,1070 328,985 341,1050 347,800 352,830 362,890 375,845 387,835 393,910 405,880 412,740 420,760 435,820 440,750 447,790 453,700 458,750 463,640 470,500 476,390 481,470 484,215 491,500 500,380 506,290 513,400 520,470 527,430 537,340 545,340 555,400 565,400 573,590 580,540 587,460 595,400 608,500 617,440 627,400 640,385 652,430 660,370 668,380 675,430 685,505 695,450 708,410 720,450 735,420 750,430 770,490 785,420 800,400 815,375 828,335 840,380 853,400 870,365 893,370 897,150 901,260 905,290 915,240 930,290 940,350 945,430 957,480 975,485 1000,450 1012,490 1020,385 1035,395 1055,335 1070,380 1080,260 1090,240 1105,310 1125,260 1140,310 1160,265 1175,285 1190,250 1196,110 1200,210 1205,210 1212,280 1218,60 1225,90 1232,270 1240,370 1246,410 1255,350 1260,260'],
[G,'138,1500 141,1100 147,850 157,1150 163,720 169,800 177,610 183,750 189,940 195,720 205,600 210,520 216,660 226,700 237,850 240,900 252,880 260,950 264,1240 272,1100 280,960 292,990 301,1080 312,1140 327,1080 335,1130 350,1060 360,970 365,1300'],
[A,'1375,420 1382,180 1388,150 1395,270 1403,190 1412,270 1420,160 1424,300'],
[G,'484,1350 492,1400 498,560 504,900 510,1300 519,1200 525,850 531,1080 540,700 547,780 552,890 560,620 567,570 573,700 579,420 588,680 600,750 607,860 620,970 632,880 648,860 655,960 665,920 675,730 700,660 712,790 723,940 730,950 740,1060 750,920 760,980 770,830'],
[B,'126,1100 130,1070 138,860 143,980 147,780 155,830 160,890 170,680 180,840 190,760 200,840 208,900 217,970 225,880 235,810 245,700 254,520 262,700 265,620 268,760 275,580 282,530 292,740 298,620 305,660 315,570 320,600 330,500 340,490 347,640 352,560 358,830 365,750 370,850 376,720 381,870 387,720 395,620 402,740 409,510 420,560 427,640 435,730 442,640 455,560 459,640 465,540 470,410 477,470 485,370 490,290 497,60 500,170 507,290 515,300 522,400 527,700 532,480 540,620 545,480 555,600 560,520 570,600 578,600 585,700 595,530 602,650 612,560 625,740 628,640 640,600 649,820 656,720 664,810 672,750 682,880 690,800 697,740 705,820 713,600 718,510 727,580 735,690 745,810 752,930 760,800 768,850 778,730 785,780 790,1050 797,1100 807,1280 815,1220 822,1250 828,1380 835,1130 845,1170 857,1080 870,1310 878,1330 887,1230 903,1170 913,1300 922,1330 930,1430 936,1515 940,1380 945,1350 955,1360 965,1320 975,1410 982,1490 988,1320 1002,1200 1012,1270 1023,1080 1032,1140 1039,1010 1045,1300 1052,1370 1060,1050 1070,1330 1078,1150 1087,1290 1095,1120 1103,1090 1115,1190 1127,1100 1138,1130 1147,1050 1160,1120 1170,1130 1185,1030 1200,1010 1210,950 1217,1030 1228,1020 1243,1120 1258,1040 1270,1110 1285,1070 1300,1050 1320,1045 1330,1090 1340,960 1350,930 1360,840 1364,880 1370,780 1380,840 1392,880 1405,870 1420,900 1430,930 1447,955 1460,890 1470,860 1485,880 1500,920 1515,880 1530,850 1543,890 1555,850 1568,840'],
[D,'140,690 155,670 165,620 172,500 180,570 193,470 203,570 214,510 222,620 229,900 233,700 240,780 247,500 250,330 258,150 265,230 270,400 277,540 284,430 293,530 300,600 305,740 308,820 318,760 332,690 343,700 355,770 365,790 378,690 390,670 398,600 407,650 418,555 430,590 437,740 441,840 447,650 455,520 463,360 470,510 480,310 488,270 495,380 500,300 510,340 522,430 530,350 540,390 547,430 560,440 570,510 573,750 576,560 582,600 590,580 602,670 612,580 625,580 635,620 645,690 657,740 670,700 688,820 697,760 705,700 713,770 720,860 727,740 735,920 742,900 755,1070 760,880 775,830 783,740 793,720 805,790 815,830 830,770 842,850 850,770 860,630 867,600 877,660 890,580 903,600 912,660 928,690 940,640 948,580 960,590 967,700 975,800 983,850 990,1060 998,930 1008,1180 1015,1090 1022,1260 1031,1450 1038,1360 1045,1290 1060,1110 1072,1220 1085,1120 1095,1240 1105,1280 1115,1240 1123,1290 1135,1160 1147,1200 1155,1150 1165,1330 1173,1400 1180,1270 1188,1230 1197,1060 1210,1110 1217,1060 1225,1120 1232,1070 1242,1180 1255,1220 1269,1290 1280,1120 1286,1020 1293,1150 1300,880 1305,640 1310,720 1318,450 1324,520 1330,300 1334,530 1345,330 1352,440 1360,500 1370,560 1380,480 1395,500 1410,600 1419,440 1427,520 1440,700 1450,590 1465,680 1475,740 1483,900 1490,830 1501,680 1510,760 1518,850 1530,870 1543,770 1555,790'],
[E,'154,300 158,360 164,620 170,750 176,600 181,680 188,610 195,660 207,600 215,610 228,545 235,620 245,660 255,640 270,675 275,635 283,695 292,660 305,650 318,630 335,670 347,640 365,640 380,700 395,680 405,710 412,780 417,900 423,800 428,840 438,810 448,920 455,930 461,1018 468,950 480,890 492,940 500,920 508,970 517,930 526,855 535,905 545,850 555,890 565,860 577,895 590,860 620,870 655,885 665,880 672,970 680,1003 690,970 705,930 715,925 730,865 748,920 770,890 783,920 797,900 803,790 812,810 820,850 830,820 838,800 848,860 862,965 877,930 893,890 905,960 915,900 930,870 942,825 950,870 967,818 975,900 990,980 995,1250 1002,1110 1008,1180 1015,1140 1025,1240 1030,1140 1042,1265 1052,1200 1063,1230 1075,1180 1090,1300 1103,1210 1117,1160 1130,1210 1140,1200 1158,1270 1167,1110 1175,1100 1183,1000 1190,1090 1197,1230 1205,1300 1213,1370 1221,1435 1228,1370 1235,1300 1243,1370 1255,1280 1265,1410 1273,1300 1283,1230 1293,1165 1305,1200 1320,1150 1335,1200 1347,1100 1360,1170 1373,1320 1385,1290 1395,1230 1420,1270 1430,1210 1445,1160 1457,1135 1467,1125 1475,1230 1490,1250 1500,1190 1515,1300 1530,1230 1541,1195 1550,1370 1557,1415'],
[F,'270,1060 276,1110 290,900 300,820 310,900 320,880 330,800 340,930 350,850 360,800 372,810 382,970 390,980 400,860 412,1060 420,930 427,890 433,1055 440,890 452,1015 465,930 480,940 487,900 493,700 500,730 512,660 527,590 540,680 550,520 558,600 570,550 580,480 590,550 602,630 612,560 622,440 630,700 640,850 645,550 652,640 660,390 668,550 678,780 690,620 700,460 708,570 715,520 723,620 733,470 742,430 755,420 765,500 775,660 785,550 797,600 805,480 815,400 820,230 830,370 842,250 855,300 870,220 882,290 887,230 895,350 905,400 915,490 924,530 932,400 937,190 947,320 957,330 965,460 972,600 978,700 988,640 997,700 1008,750 1015,640 1023,720 1030,940 1038,900 1048,840 1057,690 1065,640 1078,790 1085,600 1090,300 1097,260 1103,440 1112,640 1120,520 1132,430 1140,430 1152,400 1160,420 1168,450 1175,500']]);
// bearish regime spans; everything else is bullish
const bear=[[112,205],[206,209],[213,215],[230,231],[246,263],[268,269],[279,281],[299,313],[810,813],[971,977],[980,982],[1062,1067],[1075,1077],[1097,1099],[1618,1689],[1705,2049],[2054,2076],[2131,2133],[2477,2479],[2532,2547],[2554,2556],[2564,2589],[2634,2642],[2736,2738],[2741,2743],[2749,2752],[2760,2763],[2782,2954],[2963,2965],[2993,2997],[3006,3021],[3036,3295],[3500,4000],[4002,4014],[4021,4446],[4448,4453],[4455,4522],[4794,4798],[4801,4850]];
const marks=[
 {x:3447,y:635,t:['-0.002489','Mean touch'],ax:3448,ay:693,dir:1,bar:1,c:'#d500f9',tx:3455,ty:767,td:-1},
 {x:3436,y:987,t:['Long','+0.002489'],ax:3434,ay:960,dir:-1,c:'#2962ff',tx:3427,ty:896,td:1},
 {x:3912,y:1234,t:['-0.00255','Short'],ax:3911,ay:1291,dir:1,c:'#ff1744',tx:3918,ty:1358,td:-1},
 {x:3940,y:1481,t:['Mean touch','+0.00255'],ax:3938,ay:1457,dir:-1,bar:1,c:'#d500f9',tx:3931,ty:1401,td:1},
 {x:4154,y:1425,t:['-0.002575','Short'],ax:4153,ay:1483,dir:1,c:'#ff1744',tx:4160,ty:1533,td:-1},
 {x:4164,y:1845,t:['Mean touch','+0.002575'],ax:4162,ay:1818,dir:-1,bar:1,c:'#d500f9',tx:4155,ty:1754,td:1}];
const X0=112,XW=4791,Y0=84,YH=2217.5;
const yOf=p=>217.5+(83200-p)*.238625;

function render(){
  const W=plot.clientWidth,H=plot.clientHeight,X=x=>+((x-X0)*W/XW).toFixed(1),Y=y=>+((y-Y0)*H/YH).toFixed(1);
  chart.setAttribute('viewBox',`0 0 ${W} ${H}`);
  const line=a=>a.map((p,i)=>(i?'L':'M')+X(p[0])+' '+Y(p[1])).join('');
  let s=`<rect width="${W}" height="${H}" fill="#0f1715"/>`;
  for(const [a,b] of bear)s+=`<rect x="${X(a)}" y="0" width="${(X(b)-X(a)).toFixed(1)}" height="${H}" fill="#170f13"/>`;
  let g='';
  for(let p=83600;p>=74800;p-=400)g+=`M0 ${Math.round(Y(yOf(p)))}H${W}`;
  for(let d=0;d<21;d++)g+=`M${Math.round(X(313.5+d*219.2))} 0V${H}`;
  s+=`<path d="${g}" stroke="#fff" stroke-opacity=".06" stroke-width="2"/>`;
  s+=`<path d="${line(upper)}${line([...lower].reverse()).replace('M','L')}Z" fill="#5b9cf6" fill-opacity=".08"/>`;
  s+=`<path d="${line(upper)}" class="bb"/><path d="${line(lower)}" class="bb"/>`;
  // one bar per 15 minutes
  let seed=7;const rnd=()=>(seed=(seed*16807)%2147483647)/2147483647;
  let up='',dn='',k=0;
  const at=x=>{while(k<price.length-2&&price[k+1][0]<x)k++;const a=price[k],b=price[k+1];const t=Math.min(1,Math.max(0,(x-a[0])/(b[0]-a[0]||1)));return a[1]+(b[1]-a[1])*t};
  const step=219.2/96;let prev=at(112);
  for(let x=114;x<4903;x+=step){
    const c=at(x),rise=c<prev;
    const hi=Math.min(c,prev)-2-rnd()*rnd()*30,lo=Math.max(c,prev)+2+rnd()*rnd()*30;
    const seg=`M${X(x-1)} ${Y(hi)}V${Y(lo)}`;
    if((rnd()<.82)===rise)up+=seg;else dn+=seg;
    prev=c;
  }
  s+=`<path d="${line(mid)}" fill="none" stroke="#5b9cf6" stroke-width="3.4" stroke-linejoin="round"/>`;
  s+=`<path d="${up}" stroke="#089981" stroke-width="1.6"/><path d="${dn}" stroke="#f23645" stroke-width="1.6"/>`;
  s+=`<path d="${line(ema)}" fill="none" stroke="#ff9f0a" stroke-width="3.4" stroke-linejoin="round"/>`;
  s+=`<path d="M0 ${Y(yOf(77473))}H${W}" stroke="#f23645" stroke-width="1.6" stroke-dasharray="1.6 4.8"/>`;
  for(const m of marks){
    const ax=X(m.ax),ay=Y(m.ay),d=m.dir,tip=ay+d*25,tx=X(m.tx),ty=Y(m.ty);
    s+=`<g fill="${m.c}" stroke="#0f0f0f" stroke-width="4" paint-order="stroke"><path d="M${ax-2} ${ay}h4V${tip-d*11}h9L${ax} ${tip}L${ax-11} ${tip-d*11}h9z"/>`;
    if(m.bar)s+=`<rect x="${ax-11}" y="${tip+(d>0?0:-3)}" width="22" height="3"/>`;
    s+=`<path d="M${tx+m.td*6} ${ty}l${-m.td*12} -9v18z"/></g>`;
    m.t.forEach((t,i)=>s+=`<text x="${X(m.x)}" y="${Y(m.y)+7+i*23}" text-anchor="middle" font-size="19" fill="#b8b8b8" stroke="#0f0f0f" stroke-width="3" paint-order="stroke">${t}</text>`);
  }
  // brand mark and pane badge
  s+=`<path transform="translate(18 ${H-47})" d="M0 0h20v24H10V11H0zM39 0h11L40 24H28zM23 5.500a5 5.500 0 1 0 10 0a5 5.500 0 1 0-10 0" fill="#dbdbdb" stroke="#0f0f0f" stroke-width="5" paint-order="stroke"/>`;
  s+=`<g transform="translate(${W-12} ${H-14})"><path d="M2-10Q5-17 14-19M6 6l8 4" fill="none" stroke="#ab47bc" stroke-width="3"/><path d="M0-10Q2-2 10 0 2 2 0 10-2 2-10 0-2-2 0-10z" fill="#7c4dff" stroke="#0f0f0f" stroke-width="3" paint-order="stroke"/></g>`;
  chart.innerHTML='<style>.bb{fill:none;stroke:#4673b5;stroke-width:1.7;stroke-linejoin:round}</style>'+s;

  prices.querySelectorAll('.tick,.tags').forEach(e=>e.remove());
  let h='';
  for(let p=83200;p>=74800;p-=400)if(p!==77600&&p!==77200)h+=`<span class="tick" style="top:${((yOf(p)-Y0)/YH*100).toFixed(3)}%">${p.toLocaleString('en-US')}</span>`;
  h+=`<div class="tags" style="top:${((1465-Y0)/YH*100).toFixed(3)}%"><div class="tag blue">77,820</div><div class="tag blue">77,611</div><div class="tag red">77,572</div><div class="tag last">77,473<br><span>14:43</span></div><div class="tag blue">77,402</div><div class="tag orange">77,345</div></div>`;
  prices.insertAdjacentHTML('beforeend',h);
  times.innerHTML=Array.from({length:21},(_,d)=>`<span class="tick${d?'':' fw-semibold'}" style="left:${((313.5+d*219.2-X0)/XW*100).toFixed(3)}%">${d?d+1:'May'}</span>`).join('');
}
render();addEventListener('resize',render);
</script>
</body>
</html>
